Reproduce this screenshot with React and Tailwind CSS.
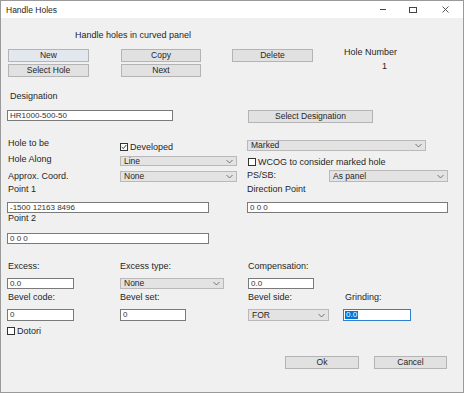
import React from "react";

const Label = ({ children, className = "" }) => (
  <div className={`h-[10px] leading-[10px] whitespace-nowrap shrink-0 ${className}`}>{children}</div>
);

const TextBox = ({ children, className = "" }) => (
  <div
    className={`shrink-0 bg-white border border-[#7a7a7a] text-[8px] leading-[9px] pl-[2px] overflow-hidden whitespace-nowrap text-[#333] ${className}`}
  >
    {children}
  </div>
);

const Chevron = () => (
  <svg width="7" height="5" viewBox="0 0 7 5" className="shrink-0">
    <polyline points="0.5,1 3.5,4 6.5,1" fill="none" stroke="#666" strokeWidth="0.9" />
  </svg>
);

const Select = ({ children, className = "" }) => (
  <div
    className={`shrink-0 flex items-center justify-between bg-[#e3e3e3] border border-[#b9b9b9] pl-[3px] pr-[3px] text-[8.5px] leading-[9px] ${className}`}
  >
    <span>{children}</span>
    <Chevron />
  </div>
);

const Button = ({ children, className = "" }) => (
  <div
    className={`shrink-0 flex items-center justify-center h-[13px] bg-[#e1e1e1] border border-[#b4b4b4] text-[8.5px] leading-[9px] ${className}`}
  >
    {children}
  </div>
);

const Check = ({ checked }) => (
  <div className="w-[8px] h-[8px] shrink-0 bg-white border border-[#333] flex items-center justify-center">
    {checked && (
      <svg width="6" height="6" viewBox="0 0 6 6">
        <polyline points="0.7,3 2.3,4.6 5.3,1" fill="none" stroke="#222" strokeWidth="0.9" />
      </svg>
    )}
  </div>
);

export default function App() {
  return (
    <div
      className="w-[464px] h-[393px] bg-[#f0f0f0] border border-[#9a9a9a] flex flex-col text-[9px] text-[#262626] overflow-hidden"
      style={{ fontFamily: '"Liberation Sans", Arial, sans-serif' }}
    >
      {/* Title bar */}
      <div className="h-[17px] shrink-0 bg-white flex items-center">
        <div className="ml-[5px] text-[8.5px] leading-[10px]">Handle Holes</div>
        <div className="ml-auto flex items-center">
          <div className="w-[6px] h-[1px] bg-[#444] mr-[23px]" />
          <div className="w-[8px] h-[6px] border border-[#444] mr-[25px]" />
          <svg width="7" height="7" viewBox="0 0 7 7" className="mr-[14px]">
            <path d="M0.5 0.5 L6.5 6.5 M6.5 0.5 L0.5 6.5" stroke="#444" strokeWidth="0.9" />
          </svg>
        </div>
      </div>

      {/* Header */}
      <Label className="mt-[12px] ml-[74px]">Handle holes in curved panel</Label>

      {/* Buttons block */}
      <div className="flex mt-[9px] h-[28px] shrink-0">
        <div className="ml-[7px] w-[81px] flex flex-col">
          <Button className="border-[#2f7fd0] bg-[#e3e8ee]">New</Button>
          <Button className="mt-[2px]">Select Hole</Button>
        </div>
        <div className="ml-[32px] w-[80px] flex flex-col">
          <Button>Copy</Button>
          <Button className="mt-[2px]">Next</Button>
        </div>
        <div className="ml-[31px] w-[81px] flex flex-col">
          <Button>Delete</Button>
        </div>
        <div className="ml-[31px] flex flex-col">
          <Label className="-mt-[2px]">Hole Number</Label>
          <Label className="mt-[4px] ml-[38px]">1</Label>
        </div>
      </div>

      {/* Designation */}
      <Label className="mt-[14px] ml-[9px]">Designation</Label>
      <div className="flex mt-[9px] h-[13px] shrink-0">
        <TextBox className="ml-[6px] w-[166px] h-[11px]">HR1000-500-50</TextBox>
        <Button className="ml-[75px] w-[125px]">Select Designation</Button>
      </div>

      {/* Row a */}
      <div className="flex mt-[17px] h-[12px] shrink-0">
        <Label className="ml-[7px] w-[112px] -mt-[2px]">Hole to be</Label>
        <div className="w-[127px] mt-[2px] h-[10px] flex items-center shrink-0">
          <Check checked />
          <span className="ml-[2px] leading-[10px]">Developed</span>
        </div>
        <Select className="w-[179px] h-[11px]">Marked</Select>
      </div>

      {/* Row b */}
      <div className="flex mt-[4px] h-[11px] shrink-0">
        <Label className="ml-[7px] w-[112px] -mt-[2px]">Hole Along</Label>
        <Select className="w-[117px] h-[10px]">Line</Select>
        <div className="ml-[11px] mt-[1px] h-[10px] flex items-center shrink-0">
          <Check />
          <span className="ml-[2px] leading-[10px]">WCOG to consider marked hole</span>
        </div>
      </div>

      {/* Row c */}
      <div className="flex mt-[3px] h-[12px] shrink-0">
        <Label className="ml-[7px] w-[112px] mt-[1px]">Approx. Coord.</Label>
        <Select className="w-[117px] h-[11px] mt-[1px]">None</Select>
        <Label className="ml-[10px] w-[82px]">PS/SB:</Label>
        <Select className="w-[119px] h-[12px]">As panel</Select>
      </div>

      {/* Row d */}
      <div className="flex mt-[2px] h-[10px] shrink-0">
        <Label className="ml-[7px] w-[239px]">Point 1</Label>
        <Label>Direction Point</Label>
      </div>

      {/* Row e */}
      <div className="flex mt-[8px] h-[11px] shrink-0">
        <TextBox className="ml-[6px] w-[202px] h-[11px]">-1500 12163 8496</TextBox>
        <TextBox className="ml-[38px] w-[201px] h-[11px]">0 0 0</TextBox>
      </div>

      <Label className="ml-[7px]">Point 2</Label>

      <div className="flex mt-[10px] h-[11px] shrink-0">
        <TextBox className="ml-[6px] w-[202px] h-[11px]">0 0 0</TextBox>
      </div>

      {/* Row h */}
      <div className="flex mt-[17px] h-[10px] shrink-0">
        <Label className="ml-[7px] w-[112px]">Excess:</Label>
        <Label className="w-[128px]">Excess type:</Label>
        <Label>Compensation:</Label>
      </div>

      {/* Row i */}
      <div className="flex mt-[7px] h-[11px] shrink-0">
        <TextBox className="ml-[6px] w-[67px] h-[11px]">0.0</TextBox>
        <Select className="ml-[46px] w-[104px] h-[11px]">None</Select>
        <TextBox className="ml-[24px] w-[66px] h-[11px]">0.0</TextBox>
      </div>

      {/* Row j */}
      <div className="flex mt-[3px] h-[10px] shrink-0">
        <Label className="ml-[7px] w-[112px]">Bevel code:</Label>
        <Label className="w-[128px]">Bevel set:</Label>
        <Label className="w-[97px]">Bevel side:</Label>
        <Label>Grinding:</Label>
      </div>

      {/* Row k */}
      <div className="flex mt-[7px] h-[12px] shrink-0">
        <TextBox className="ml-[6px] w-[67px] h-[12px] leading-[10px]">0</TextBox>
        <TextBox className="ml-[46px] w-[66px] h-[12px] leading-[10px]">0</TextBox>
        <Select className="ml-[62px] w-[81px] h-[12px]">FOR</Select>
        <div className="ml-[14px] w-[68px] h-[12px] shrink-0 bg-white border border-[#2f7fd0] flex items-center pl-[1px]">
          <span className="bg-[#0078d7] text-white text-[8px] leading-[8px] px-[1px]">0.0</span>
        </div>
      </div>

      {/* Row l */}
      <div className="flex mt-[5px] h-[10px] items-center shrink-0">
        <div className="ml-[6px]">
          <Check />
        </div>
        <span className="ml-[2px] leading-[10px]">Dotori</span>
      </div>

      {/* Row m */}
      <div className="flex mt-[20px] h-[13px] shrink-0">
        <Button className="ml-[284px] w-[74px]">Ok</Button>
        <Button className="ml-[15px] w-[73px]">Cancel</Button>
      </div>
    </div>
  );
}
